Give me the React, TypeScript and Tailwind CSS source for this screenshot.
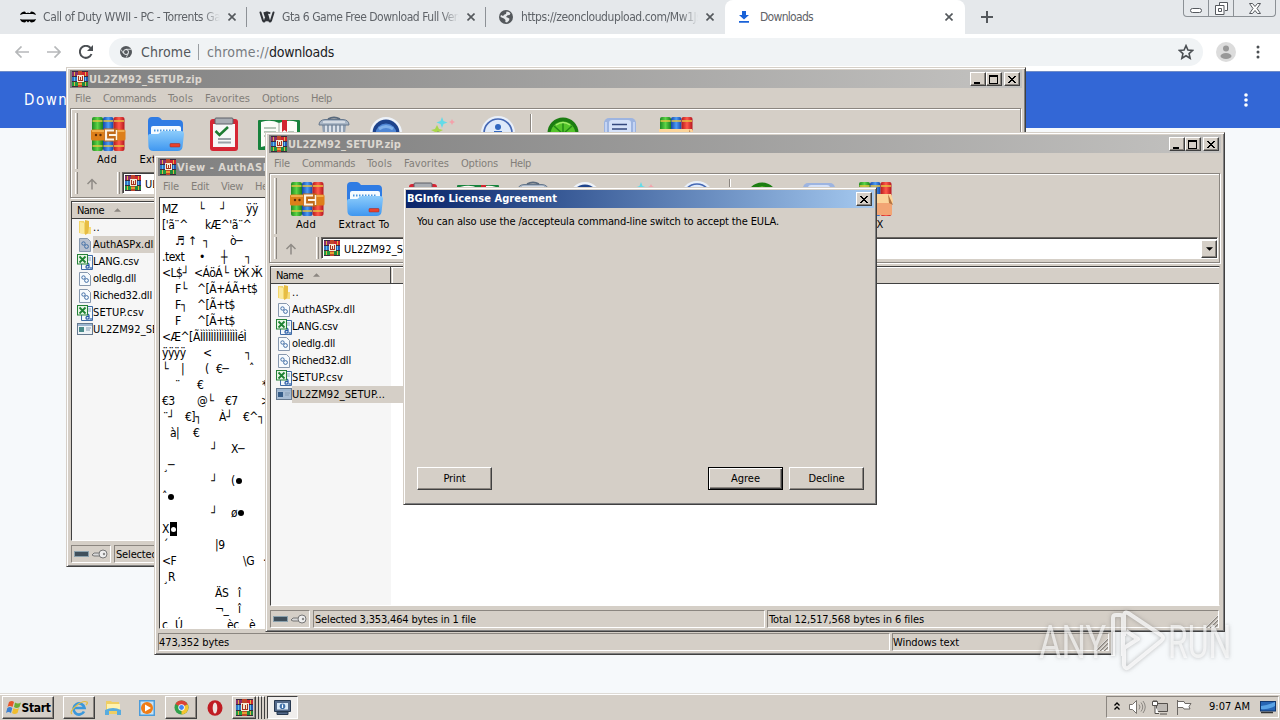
import { useLayoutEffect, useRef, useState } from "react";
import type { ReactNode } from "react";

/* Text stretched or tightened by letter spacing so that it fills a given width. */
function Fit({ w, children, className = "" }: { w: number; children: string; className?: string }) {
  const ref = useRef<HTMLSpanElement>(null);
  const [spacing, setSpacing] = useState(0);
  useLayoutEffect(() => {
    if (ref.current) {
      const natural = ref.current.getBoundingClientRect().width;
      setSpacing((w - natural) / children.length);
    }
  }, []);
  return (
    <span ref={ref} className={`inline-block shrink-0 whitespace-pre ${className}`} style={{ letterSpacing: spacing }}>
      {children}
    </span>
  );
}

type Token = [number, string];

/* A line of tokens, each starting at its own column offset. */
function TokenLine({ tokens, className = "" }: { tokens: Token[]; className?: string }) {
  const first = tokens.length ? tokens[0][0] : 0;
  return (
    <div className={`flex whitespace-pre ${className}`} style={{ paddingLeft: first }}>
      {tokens.map(([x, text], i) => (
        <span key={i} className="shrink-0" style={{ width: i + 1 < tokens.length ? tokens[i + 1][0] - x : undefined }}>
          {text}
        </span>
      ))}
    </div>
  );
}

function RarIcon({ className = "" }: { className?: string }) {
  return (
    <svg viewBox="0 0 16 16" className={`h-4 w-4 shrink-0 ${className}`} shapeRendering="crispEdges">
      <rect width="16" height="16" fill="#3a2a3c" />
      <rect x="0" y="1" width="6" height="4" fill="#8d2d6c" />
      <rect x="10" y="1" width="6" height="4" fill="#cf2430" />
      <rect x="0" y="6" width="6" height="4" fill="#2f73c4" />
      <rect x="10" y="6" width="6" height="4" fill="#2856b0" />
      <rect x="0" y="11" width="6" height="4" fill="#1f9a40" />
      <rect x="10" y="11" width="6" height="4" fill="#1f8a3a" />
      <rect x="6" y="0" width="4" height="16" fill="#c0462a" />
      <rect x="6" y="12" width="4" height="2" fill="#e5a033" />
      <rect x="5" y="4" width="7" height="7" fill="#f4ead6" />
      <path d="M6 5h1v4h1V6h1v3h1V5h1v5H6z" fill="#a8321f" />
      <path d="M2 1h1v4H2zM13 1h1v4h-1zM2 11h1v4H2zM13 11h1v4h-1z" fill="#e3b040" />
      <path d="M2 6h1v4H2zM13 6h1v4h-1z" fill="#5fc4e8" />
    </svg>
  );
}

function BooksIcon({ box = false }: { box?: boolean }) {
  return (
    <svg viewBox="0 0 36 36" className="h-9 w-9">
      <defs>
        <linearGradient id="bkG"><stop offset="0" stopColor="#1d8a22" /><stop offset=".5" stopColor="#5ed447" /><stop offset="1" stopColor="#178020" /></linearGradient>
        <linearGradient id="bkB"><stop offset="0" stopColor="#1546a8" /><stop offset=".5" stopColor="#4d9cf4" /><stop offset="1" stopColor="#1546a8" /></linearGradient>
        <linearGradient id="bkR"><stop offset="0" stopColor="#b51a1c" /><stop offset=".5" stopColor="#ff5a4a" /><stop offset="1" stopColor="#b51620" /></linearGradient>
      </defs>
      <rect x="2" y="1" width="11" height="34" rx="2" fill="url(#bkG)" />
      <rect x="13" y="1" width="10.5" height="34" rx="2" fill="url(#bkB)" />
      <rect x="23.5" y="1" width="11" height="34" rx="2" fill="url(#bkR)" />
      <path d="M2.5 5h10M13.5 5h9.5M24 5h10M2.5 30h10M13.5 30h9.500M24 30h10" stroke="#e9c541" strokeWidth="1.6" />
      {box ? (
        <>
          <path d="M1 14h34v20H1z" fill="#f2a574" />
          <path d="M1 13h33l3 9H19l-18 0z" fill="#fbd49a" />
          <path d="M31 13l5 11-4-2z" fill="#b5733f" />
        </>
      ) : (
        <>
          <rect x="1" y="13.500" width="34.500" height="11" rx="1.500" fill="#dd7f1a" />
          <path d="M2 15h32.500" stroke="#f9bd5e" strokeWidth="1.500" />
          <path d="M14 12.500h13.500v13H14z" fill="#c06a18" />
          <path d="M24 14.500h-8v9h8M19 19h8" fill="none" stroke="#fbf3e6" strokeWidth="2.200" />
          <path d="M26.500 14v10" stroke="#fbf3e6" strokeWidth="1.500" />
          <circle cx="6" cy="19" r="1.200" fill="#5c2d0a" />
          <circle cx="10.500" cy="19" r="1.200" fill="#5c2d0a" />
        </>
      )}
    </svg>
  );
}

function ExtractIcon() {
  return (
    <svg viewBox="0 0 38 36" className="h-9 w-[38px]">
      <defs>
        <linearGradient id="fold" x2="0" y2="1"><stop offset="0" stopColor="#8cccfb" /><stop offset="1" stopColor="#3f97f0" /></linearGradient>
      </defs>
      <path d="M1 5q0-4 4-4h6q2 0 4 3h17q4 0 4 4v12H1z" fill="#2f7ce4" />
      <path d="M4 12q0-2 2-2h26q2 0 2 2v12H4z" fill="#f5fbff" />
      <path d="M7 14.500h24" stroke="#4b96de" strokeWidth="2" strokeDasharray="1.500 1.500" />
      <path d="M1 20q0-2 2-2h7q2 0 3-1.500t3-1.500h18q3 0 3 3l-1.500 13q-.5 4-5 4H6.500q-4.500 0-5-4z" fill="url(#fold)" />
      <rect x="23" y="27.500" width="10" height="3.500" rx=".8" fill="#e8412c" stroke="#9c2420" strokeWidth=".5" />
    </svg>
  );
}

function TestIcon() {
  return (
    <svg viewBox="0 0 32 36" className="h-9 w-8">
      <rect x="2" y="3" width="28" height="32" rx="3" fill="#d62534" />
      <rect x="5" y="8" width="22" height="23" fill="#f7f7f7" />
      <rect x="7" y="2" width="18" height="6" rx="1" fill="#a9adb3" stroke="#5d5f66" />
      <path d="M7.500 15l4 4L20 11" stroke="#1f7c32" strokeWidth="2.500" fill="none" />
      <path d="M10 23h13M10 26.500h13" stroke="#9aa1a8" strokeWidth="2" />
    </svg>
  );
}

function ViewIcon() {
  return (
    <svg viewBox="0 0 44 36" className="h-9 w-11">
      <rect x="1" y="4" width="42" height="30" rx="1" fill="#17823c" />
      <path d="M4 6q10-3 18 1q9-4 18-1v25q-9-3-18 1q-8-4-18-1z" fill="#fbfdf8" />
      <path d="M22 7v25" stroke="#9aa79b" />
      <path d="M7 12h12M7 16h12M7 20h12M31 16h6M26 20h11" stroke="#9fb5a2" strokeWidth="1.500" />
      <path d="M25 4h5v12l-2.500-2-2.500 2z" fill="#d22630" />
    </svg>
  );
}

function DeleteIcon() {
  return (
    <svg viewBox="0 0 32 36" className="h-9 w-8">
      <path d="M4 9h24l-3 26H7z" fill="#91a0b2" />
      <path d="M8 9v25M12 9v25M16 9v25M20 9v25M24 9v25" stroke="#e9eef4" strokeWidth="1.700" />
      <path d="M1 9q0-5 6-5.500h18q6 .5 6 5.500z" fill="#a9b6c6" stroke="#66788d" />
      <path d="M10 3q6-3 12 0" stroke="#59697c" strokeWidth="1.800" fill="none" />
      <path d="M5 6h22" stroke="#fff" fill="none" />
    </svg>
  );
}

function FindIcon() {
  return (
    <svg viewBox="0 0 34 36" className="h-9 w-[34px]">
      <circle cx="17" cy="17" r="16" fill="#eef3fa" />
      <circle cx="17" cy="17" r="13.500" fill="#1d438c" />
      <circle cx="17" cy="18" r="10.500" fill="#4f86d4" />
      <path d="M10 13q7-5 14 0" stroke="#7fb0ea" strokeWidth="3" fill="none" />
    </svg>
  );
}

function WizardIcon() {
  return (
    <svg viewBox="0 0 34 36" className="h-9 w-[34px]">
      <path d="M18 1l1.500 4 4 1.500-4 1.500-1.500 4-1.500-4-4-1.500 4-1.500z" fill="#62dbe8" />
      <path d="M13 9l2 4 4 1-4 2-2 5-2-5-4-2 4-1z" fill="#a9d64b" />
      <path d="M28 3l1 2 2 1-2 1-1 2-1-2-2-1 2-1z" fill="#f3a1aa" />
      <path d="M15 16L4 34" stroke="#6d5ca8" strokeWidth="3" />
    </svg>
  );
}

function InfoIcon() {
  return (
    <svg viewBox="0 0 34 36" className="h-9 w-[34px]">
      <circle cx="17" cy="17" r="17" fill="#e9f0fa" />
      <circle cx="17" cy="17" r="14" fill="#dfeafa" stroke="#4568b4" strokeWidth="1.700" />
      <circle cx="17" cy="11" r="3" fill="#3268c0" />
      <path d="M13 17h6v10" stroke="#3268c0" strokeWidth="4" fill="none" />
    </svg>
  );
}

function VirusIcon() {
  return (
    <svg viewBox="0 0 34 36" className="h-9 w-[34px]">
      <circle cx="17" cy="17" r="15.500" fill="#1c7d12" />
      <circle cx="17" cy="18" r="12.500" fill="#55c52b" />
      <path d="M17 6v26M5 18h24M8 10l18 16M26 10L8 26" stroke="#238a17" strokeWidth="1.500" />
      <path d="M10 9q7-5 14 0" stroke="#a5ec6c" strokeWidth="1.500" fill="none" />
    </svg>
  );
}

function CommentIcon() {
  return (
    <svg viewBox="0 0 34 36" className="h-9 w-[34px]">
      <rect x="1" y="2" width="32" height="32" rx="5" fill="#9db4e0" />
      <rect x="6" y="4" width="22" height="28" rx="3" fill="#d5e1f8" />
      <path d="M9 8.500h15M9 13h15" stroke="#34487d" strokeWidth="1.700" />
      <path d="M3 6v22M31 6v22" stroke="#c4d4f4" strokeWidth="2" />
    </svg>
  );
}

const TOOLS: { w: string; icon: ReactNode; label: string; lw: number }[] = [
  { w: "w-[58px]", icon: <BooksIcon />, label: "Add", lw: 20 },
  { w: "w-[58px]", icon: <ExtractIcon />, label: "Extract To", lw: 51 },
  { w: "w-[58px]", icon: <TestIcon />, label: "Test", lw: 21 },
  { w: "w-[52px]", icon: <ViewIcon />, label: "View", lw: 23 },
  { w: "w-[58px]", icon: <DeleteIcon />, label: "Delete", lw: 32 },
  { w: "w-[46px]", icon: <FindIcon />, label: "Find", lw: 22 },
  { w: "w-[64px]", icon: <WizardIcon />, label: "Wizard", lw: 35 },
  { w: "w-[50px]", icon: <InfoIcon />, label: "Info", lw: 20 },
  { w: "w-[16px]", icon: null, label: "", lw: 0 },
  { w: "w-[48px]", icon: <VirusIcon />, label: "VirusScan", lw: 47 },
  { w: "w-[66px]", icon: <CommentIcon />, label: "Comment", lw: 48 },
  { w: "w-[46px]", icon: <BooksIcon box />, label: "SFX", lw: 18 },
];

function TitleButton({ kind }: { kind: "min" | "max" | "close" }) {
  return (
    <div className="flex h-[14px] w-4 items-center justify-center border border-t-white border-r-[#404040] border-b-[#404040] border-l-white bg-[#d5cfc7] shadow-[inset_-1px_-1px_0_#8b8680]">
      <svg viewBox="0 0 12 11" className="h-[11px] w-3" shapeRendering="crispEdges">
        {kind === "min" && <path d="M2 8h6v2H2z" fill="#000" />}
        {kind === "max" && <path d="M1 1h9v9H1zM2 3v6h7V3z" fillRule="evenodd" fill="#000" />}
        {kind === "close" && <path d="M2 2h2v1h1v1h2V3h1V2h2v1H9v1H8v1H7v1h1v1h1v1h1v1H8V8H7V7H5v1H4v1H2V8h1V7h1V6h1V5H4V4H3V3H2z" fill="#000" />}
      </svg>
    </div>
  );
}

const FRAME =
  "absolute flex flex-col border border-t-[#d5cfc7] border-r-[#404040] border-b-[#404040] border-l-[#d5cfc7] bg-[#d5cfc7] shadow-[inset_1px_1px_0_#ffffff,inset_-1px_-1px_0_#808080]";

const SUNKEN = "border border-t-[#8b8680] border-r-white border-b-white border-l-[#8b8680]";

function Grip({ className = "" }: { className?: string }) {
  return <div className={`w-[3px] shrink-0 border-r border-l border-r-[#8b8680] border-l-white ${className}`} />;
}

function FileIcon({ kind, dim }: { kind: string; dim?: boolean }) {
  if (kind === "up")
    return (
      <svg viewBox="0 0 16 16" className="h-4 w-4">
        <path d="M2 1h5l1 2v11l-6-1z" fill="#f2d66c" />
        <path d="M8 0l4 1v12l-4 2z" fill="#e7bd44" />
        <path d="M3 2l4 1v11l-4-1z" fill="#fbe99c" />
        <path d="M12 7h2v7h-3z" fill="#f6dd80" />
      </svg>
    );
  if (kind === "dll")
    return (
      <svg viewBox="0 0 16 16" className="h-4 w-4">
        <path d="M2.500 1.500h8l3 3v10h-11z" fill={dim ? "#b8c0cf" : "#f6fafd"} stroke="#8798ae" />
        <circle cx="6.500" cy="6.500" r="1.700" fill="none" stroke="#416ea6" />
        <circle cx="9.500" cy="9.500" r="1.900" fill="none" stroke="#416ea6" />
      </svg>
    );
  if (kind === "csv")
    return (
      <svg viewBox="0 0 16 16" className="h-4 w-4">
        <path d="M6.500 1.500h9v14h-11v-6" fill="#f3f8fc" stroke="#3e6ba5" />
        <path d="M11 4h3M11 6h3" stroke="#8fa9c8" />
        <path d="M9 9.500q3-1 3 1v4M12 11.500q-3-.5-3 1.500t3 .5M14 13v2" stroke="#2458a4" strokeWidth="1.200" fill="none" />
        <rect x="0.500" y="0.500" width="10" height="9.500" fill="#e9f6e7" stroke="#268238" />
        <path d="M2.500 2.500l6 6M8.500 2.500l-6 6" stroke="#1e8233" strokeWidth="1.800" />
      </svg>
    );
  return (
    <svg viewBox="0 0 16 16" className="h-4 w-4">
      <rect x="0.500" y="1.500" width="15" height="11" fill={dim ? "#a8bdd4" : "#eef3f7"} stroke="#65798f" />
      <rect x="1" y="2" width="14" height="2" fill="#9db6d0" />
      <rect x="2" y="5" width="5" height="5" fill={dim ? "#365d88" : "#4b8b8b"} />
      <path d="M9 6h5M9 8h4" stroke="#869db4" />
    </svg>
  );
}

const FILES = [
  { kind: "up", name: "..", w: 7 },
  { kind: "dll", name: "AuthASPx.dll", w: 63 },
  { kind: "csv", name: "LANG.csv", w: 46 },
  { kind: "dll", name: "oledlg.dll", w: 43 },
  { kind: "dll", name: "Riched32.dll", w: 59 },
  { kind: "csv", name: "SETUP.csv", w: 51 },
  { kind: "exe", name: "UL2ZM92_SETUP...", w: 93 },
];

function Resize({ className = "" }: { className?: string }) {
  return (
    <svg viewBox="0 0 13 13" className={`h-[13px] w-[13px] ${className}`}>
      <path d="M1 13L13 1M5 13l8-8M9 13l4-4" stroke="#8b8680" strokeWidth="1.500" />
      <path d="M0 13L13 0M4 13l9-9M8 13l5-5" stroke="#fff" strokeWidth=".6" />
    </svg>
  );
}

function ArchiveWindow({ place, selected }: { place: string; selected: number }) {
  return (
    <section className={`${FRAME} ${place} h-[500px] w-[960px] px-[3px] pt-[2px]`}>
      <header className="flex h-[18px] shrink-0 items-center bg-linear-to-r from-[#808080] to-[#c3c2c0] pr-[2px] pl-[2px]">
        <RarIcon />
        <Fit w={113} className="mt-px ml-px text-[11px] leading-[18px] font-bold text-[#dcd7d0]">UL2ZM92_SETUP.zip</Fit>
        <div className="ml-auto flex">
          <TitleButton kind="min" />
          <TitleButton kind="max" />
          <div className="w-[2px]" />
          <TitleButton kind="close" />
        </div>
      </header>
      <nav className="flex h-5 shrink-0 items-center gap-[12px] pt-[2px] pl-[5px] text-[#827e79]">
        <Fit w={16}>File</Fit>
        <Fit w={53}>Commands</Fit>
        <Fit w={25}>Tools</Fit>
        <Fit w={45}>Favorites</Fit>
        <Fit w={37}>Options</Fit>
        <Fit w={21}>Help</Fit>
      </nav>
      <div className="mr-px h-[90px] shrink-0 border border-[#8b8680] shadow-[inset_1px_1px_0_#fff,1px_1px_0_#fff]">
        <div className="flex h-[62px] pt-1 pl-1">
          <Grip className="h-[56px]" />
          <div className="flex pt-[3px] pl-px">
            {TOOLS.map((t, i) => (
              <div key={i} className={`${t.w} flex shrink-0 flex-col items-center`}>
                {t.icon ? (
                  <>
                    {t.icon}
                    <Fit w={t.lw} className="mt-px mr-[2px] leading-[14px]">{t.label}</Fit>
                  </>
                ) : (
                  <div className="-mt-[2px] h-[56px] w-[2px] border-r border-l border-r-white border-l-[#8b8680]" />
                )}
              </div>
            ))}
          </div>
        </div>
        <div className="flex h-[24px] items-start pt-px pr-px pl-1">
          <Grip className="h-[22px]" />
          <svg viewBox="0 0 12 12" className="mt-[6px] ml-[8px] h-3 w-3">
            <path d="M6 11.500V2M1.500 6L6 1.500 10.500 6" stroke="#8f8b86" strokeWidth="1.500" fill="none" />
          </svg>
          <Grip className="ml-[19px] h-[22px]" />
          <div className="ml-[2px] flex h-[22px] grow items-center border border-t-[#6b6762] border-r-white border-b-white border-l-[#6b6762] bg-white pl-px shadow-[inset_1px_1px_0_#404040]">
            <RarIcon className="ml-px" />
            <Fit w={101} className="mt-[3px] ml-[4px]">UL2ZM92_SETUP.zip</Fit>
            <div className="mt-px ml-auto flex h-[18px] w-4 items-center justify-center border border-t-white border-r-[#404040] border-b-[#404040] border-l-white bg-[#d5cfc7] shadow-[inset_-1px_-1px_0_#8b8680]">
              <svg viewBox="0 0 8 4" className="h-1 w-[7px]"><path d="M0 0h8L4 4z" /></svg>
            </div>
          </div>
        </div>
      </div>
      <div className="mt-[3px] mr-px ml-px flex h-[340px] shrink-0 flex-col border border-t-[#404040] border-r-[#d5cfc7] border-b-[#ffffff] border-l-[#404040] bg-white">
        <div className="flex h-[17px] shrink-0 border-b border-b-[#404040] bg-[#d5cfc7] shadow-[inset_0_1px_0_#fff]">
          <div className="flex w-[120px] items-center border-r border-r-[#404040] pt-[2px] pl-[5px]">
            <Fit w={27}>Name</Fit>
            <svg viewBox="0 0 8 4" className="mb-[2px] ml-[10px] h-1 w-[7px]"><path d="M0 4h8L4 0z" fill="#8b8680" /></svg>
          </div>
          <div className="ml-px w-px bg-white" />
        </div>
        <div className="h-[321px] w-[120px] bg-[#f6f6f6]">
          {FILES.map((f, i) => (
            <div key={f.name} className="flex h-[17px] w-[200px] items-center pl-[4px]">
              <div className="flex w-[17px] shrink-0 justify-center"><FileIcon kind={f.kind} dim={i === selected} /></div>
              <div className={`flex h-[17px] w-[180px] items-center pt-px ${i === selected ? "bg-[#d5cfc7]" : ""}`}>
                <Fit w={f.w}>{f.name}</Fit>
              </div>
            </div>
          ))}
        </div>
      </div>
      <footer className="mt-[4px] mr-[2px] ml-px flex h-[18px] gap-[2px]">
        <div className={`${SUNKEN} mr-px flex w-[40px] items-center justify-center gap-[3px]`}>
          <svg viewBox="0 0 15 6" className="h-[6px] w-[15px]"><rect x=".5" y=".5" width="14" height="5" fill="#40505c" stroke="#8ba1ad" /></svg>
          <svg viewBox="0 0 16 10" className="h-[10px] w-4">
            <path d="M8 4H2L0 6l2 1h6z" fill="#d8d8d8" stroke="#777" />
            <circle cx="11" cy="5" r="4" fill="#eee" stroke="#777" />
            <circle cx="12" cy="5" r="1.200" fill="#888" />
          </svg>
        </div>
        <div className={`${SUNKEN} flex w-[452px] items-center pt-px`}><Fit w={161} className="ml-px">Selected 3,353,464 bytes in 1 file</Fit></div>
        <div className={`${SUNKEN} flex grow items-center justify-between pt-px`}>
          <Fit w={155} className="ml-px">Total 12,517,568 bytes in 6 files</Fit>
          <Resize className="mt-[3px]" />
        </div>
      </footer>
    </section>
  );
}

const HEX_LINES: Token[][] = [
  [[1, "MZ"], [37, "└"], [59, "┘"], [85, "ÿÿ"]],
  [[1, "['ã¨^"], [44, "kÆ^'ã¨^"]],
  [[14, "♬"], [27, "↑"], [42, "┐"], [69, "ò─"]],
  [[1, ".text"], [38, "•"], [60, "┼"], [84, "┐"]],
  [[1, "<L$┘"], [33, "<ÁöÁ└"], [73, "tӁ"], [90, "Ӂ"]],
  [[14, "F└"], [36, "^[Ã+ÁÃ+t$"]],
  [[14, "F┐"], [36, "^[Ã+t$"]],
  [[14, "F"], [36, "^[Ã+t$"]],
  [[1, "<Æ^["], [32, "ÃÌÌÌÌÌÌÌÌÌÌÌÌÌÌéÌ"]],
  [[1, "ÿÿÿÿ"], [42, "<"], [84, "┐"]],
  [[1, "└"], [20, "|"], [44, "("], [55, "€─"], [88, "ˆ"]],
  [[14, "¨"], [36, "€"], [101, "*"]],
  [[1, "€3"], [36, "@└"], [64, "€7"], [100, ">"]],
  [[2, "¨┘"], [24, "€]┐"], [58, "À┘"], [82, "€^┐"]],
  [[9, "à|"], [32, "€"]],
  [[50, "┘"], [70, "X─"]],
  [[2, "¸─"]],
  [[50, "┘"], [70, "("], [75, "⚫"]],
  [[1, "ˆ"], [8, "⚫"]],
  [[50, "┘"], [70, "ø"], [77, "⚫"]],
  [],
  [[2, "´"], [54, "|9"]],
  [[1, "<F"], [82, "\\G"], [102, "·"]],
  [[2, "¸R"]],
  [[54, "ÄS"], [77, "î"]],
  [[54, "¬_"], [77, "î"]],
  [[1, "c"], [14, "Ú"], [66, "èc"], [88, "è"]],
];

function ViewerWindow() {
  return (
    <section className={`${FRAME} top-[155px] left-[154px] h-[500px] w-[959px] px-[3px] pt-[2px]`}>
      <header className="flex h-[18px] shrink-0 items-center bg-linear-to-r from-[#808080] to-[#c3c2c0] pl-[2px]">
        <RarIcon />
        <Fit w={120} className="mt-px ml-px text-[11px] leading-[18px] font-bold text-[#dcd7d0]">View - AuthASPx.dll</Fit>
      </header>
      <nav className="flex h-5 shrink-0 items-center gap-[12px] pt-[2px] pl-[5px] text-[#827e79]">
        <Fit w={16}>File</Fit>
        <Fit w={18}>Edit</Fit>
        <Fit w={22}>View</Fit>
        <Fit w={21}>Help</Fit>
      </nav>
      <div className="mt-px mr-[2px] ml-px h-[432px] shrink-0 overflow-hidden border border-t-[#404040] border-r-[#d5cfc7] border-b-white border-l-[#404040] bg-white pt-[3px] pl-px text-[12px]">
        {HEX_LINES.map((tokens, i) =>
          i === 20 ? (
            <div key={i} className="flex h-4 items-center pl-px">
              X<span className="ml-[1px] flex h-[14px] w-[7px] items-center justify-center bg-black"><span className="h-[5px] w-[5px] rounded-full bg-white" /></span>
            </div>
          ) : (
            <TokenLineRow key={i} tokens={tokens} />
          ),
        )}
      </div>
      <footer className="mt-[4px] flex h-[18px] gap-[2px]">
        <div className={`${SUNKEN} flex w-[732px] items-center pt-px`}><Fit w={70}>473,352 bytes</Fit></div>
        <div className={`${SUNKEN} flex grow items-center justify-between pt-px`}>
          <Fit w={66}>Windows text</Fit>
          <Resize className="mt-[3px]" />
        </div>
      </footer>
    </section>
  );
}

/* The heavy dots are drawn as small discs, everything else as text. */
function TokenLineRow({ tokens }: { tokens: Token[] }) {
  const dot = tokens.length > 0 && tokens[tokens.length - 1][1] === "⚫";
  const texts = dot ? tokens.slice(0, -1) : tokens;
  return (
    <div className="flex h-4 items-center">
      <TokenLine tokens={texts} className="leading-4 tracking-[-0.5px]" />
      {dot && <span className="ml-px h-[6px] w-[6px] rounded-full bg-black" />}
    </div>
  );
}

function DialogButton({ label, w, primary }: { label: string; w: number; primary?: boolean }) {
  return (
    <button
      className={`flex h-[23px] w-[75px] items-center justify-center border bg-[#d5cfc7] ${
        primary
          ? "border-black shadow-[inset_1px_1px_0_#fff,inset_-1px_-1px_0_#404040,inset_-2px_-2px_0_#8b8680]"
          : "border-t-white border-r-[#404040] border-b-[#404040] border-l-white shadow-[inset_-1px_-1px_0_#8b8680]"
      }`}
    >
      <Fit w={w}>{label}</Fit>
    </button>
  );
}

function LicenseDialog() {
  return (
    <section className={`${FRAME} top-[187px] left-[403px] h-[318px] w-[474px] px-[2px] pt-[2px]`}>
      <header className="flex h-[18px] shrink-0 items-center justify-between bg-linear-to-r from-[#0a246a] to-[#a6caf0] pr-[2px] pl-px">
        <Fit w={150} className="text-[11px] leading-[18px] font-bold text-white">BGInfo License Agreement</Fit>
        <TitleButton kind="close" />
      </header>
      <p className="pt-[6px] pl-[11px] leading-4"><Fit w={362}>You can also use the /accepteula command-line switch to accept the EULA.</Fit></p>
      <div className="mt-auto mb-[14px] flex gap-[6px] pr-[10px] pl-[11px]">
        <DialogButton label="Print" w={22} />
        <div className="grow" />
        <DialogButton label="Agree" w={29} primary />
        <DialogButton label="Decline" w={36} />
      </div>
    </section>
  );
}

function TabClose() {
  return (
    <svg viewBox="0 0 8 8" className="h-2 w-2 shrink-0"><path d="M.5.5l7 7M7.500.5l-7 7" stroke="#54585c" strokeWidth="1.600" /></svg>
  );
}

function Tab({ icon, text, w, last }: { icon: ReactNode; text: string; w: number; last?: boolean }) {
  return (
    <div className="flex h-[34px] w-[239px] shrink-0 items-center pl-[11px]">
      <div className="flex w-[16px] shrink-0 justify-center">{icon}</div>
      <div className="ml-[7px] w-[177px] overflow-hidden mask-r-from-90% text-[12px] text-[#5f6368]"><Fit w={w}>{text}</Fit></div>
      <div className="ml-[8px]"><TabClose /></div>
      {!last && <div className="mr-px ml-auto h-5 w-px bg-[#8d9196]" />}
    </div>
  );
}

function Globe({ className = "" }: { className?: string }) {
  return (
    <svg viewBox="0 0 14 14" className={className}>
      <circle cx="7" cy="7" r="7" fill="#54585c" />
      <path d="M7.500 1.500L10 2l1.500 1.500-1 1.500-2 .3L7 7l2 .8 1.500 1L10 10.500 8 12.500 6.300 12l.2-2L5 8.500 1.500 7q0-1 .5-2l2 1 1.500-1.500L7 4z" fill="#e6e9eb" />
    </svg>
  );
}

function Browser() {
  return (
    <div className="flex h-[693px] flex-col bg-[#f6f9fb]">
      <div className="flex h-[34px] shrink-0 bg-[#e5e8eb] pl-[9px]">
        <Tab
          text="Call of Duty WWII - PC - Torrents Games"
          w={199}
          icon={
            <svg viewBox="0 0 16 12" className="h-3 w-4">
              <path d="M0 4Q1 .5 5 .5L6 2h1.500L8 1l.5 1H10l1-1.500Q15 .5 16 4l-3-1-10 0zM0 8q1 3.500 5 3.500L6.500 10 8 11.500 9.500 10l1.500 1.500q4 0 5-3.500l-2 .5H2z" fill="#000" />
            </svg>
          }
        />
        <Tab
          text="Gta 6 Game Free Download Full Version"
          w={196}
          icon={
            <svg viewBox="0 0 16 12" className="h-3 w-4">
              <path d="M1.500 1.500l2.500 8q1 2 2 0l2-7 2 7q1 2 2 0l2.500-8M8 3Q7 1 5.500 2L8 9.500M8 3q1-2 2.500-1" stroke="#303338" strokeWidth="2" fill="none" strokeLinecap="round" />
            </svg>
          }
        />
        <Tab text="https://zeoncloudupload.com/Mw1Jsd" w={187} last icon={<Globe className="h-[14px] w-[14px]" />} />
        <div className="-ml-px flex w-[240px] items-center rounded-t-lg bg-white pl-[14px]">
          <svg viewBox="0 0 10 12" className="h-3 w-[10px]"><path d="M3 0h4v4h3L5 8.500 0 4h3zM0 10h10v1.700H0z" fill="#1a62d8" /></svg>
          <Fit w={53} className="ml-[11px] text-[12px] text-[#5f6368]">Downloads</Fit>
          <div className="mr-[12px] ml-auto"><TabClose /></div>
        </div>
        <svg viewBox="0 0 12 12" className="mt-[11px] ml-[16px] h-3 w-3"><path d="M6 0v12M0 6h12" stroke="#54585c" strokeWidth="2" /></svg>
        <div className="mr-1 ml-auto flex h-[17px] w-[93px] rounded-b border border-t-0 border-[#8b9095]">
          <div className="flex w-[25px] items-end justify-center border-r border-[#8b9095] pb-[3px]"><div className="h-[5px] w-3 rounded-sm border border-[#55595e] bg-white" /></div>
          <div className="flex w-[25px] items-center justify-center border-r border-[#8b9095]">
            <svg viewBox="0 0 13 13" className="h-[13px] w-[13px]"><path d="M4.500 3V.5h8v8H10M.5 3.500h8.500v9H.5zM3.500 6.500h3v3h-3z" fill="#fff" stroke="#55595e" /></svg>
          </div>
          <div className="flex grow items-center justify-center">
            <svg viewBox="0 0 12 11" className="h-[11px] w-3"><path d="M.5.500h3L6 3.500 8.500.5h3L8 5.500l3.500 5h-3L6 7.500l-2.500 3h-3L4 5.500z" fill="#fff" stroke="#55595e" /></svg>
          </div>
        </div>
      </div>
      <div className="flex h-[37px] shrink-0 items-center bg-white pb-[2px] pl-[15px]">
        <svg viewBox="0 0 14 12" className="h-3 w-[14px]"><path d="M14 6H1M6.500.5L1 6l5.500 5.500" stroke="#b6b8ba" strokeWidth="1.700" fill="none" /></svg>
        <svg viewBox="0 0 14 12" className="ml-[18px] h-3 w-[14px]"><path d="M0 6h13M7.500.5L13 6l-5.500 5.500" stroke="#b6b8ba" strokeWidth="1.700" fill="none" /></svg>
        <svg viewBox="0 0 14 14" className="ml-[18px] h-[14px] w-[14px]"><path d="M12.500 9A6 6 0 1 1 11.500 3" stroke="#4b4f53" strokeWidth="2" fill="none" /><path d="M14 0v6H8z" fill="#4b4f53" /></svg>
        <div className="ml-[16px] flex h-7 w-[1094px] items-center rounded-full bg-[#f0f3f5] pl-[11px] text-[14px]">
          <svg viewBox="0 0 12 12" className="h-3 w-3">
            <circle cx="6" cy="6" r="6" fill="#54585c" />
            <circle cx="6" cy="6" r="2.500" fill="#54585c" stroke="#eef1f3" />
            <path d="M6 3.300h5.500M3.500 7.500L1 3.500M8.300 7.500L6 11.800" stroke="#eef1f3" strokeWidth=".8" />
          </svg>
          <Fit w={50} className="ml-[9px] text-[#54585c]">Chrome</Fit>
          <div className="ml-[7px] h-4 w-px bg-[#9a9ea2]" />
          <Fit w={62} className="ml-[8px] text-[#777b80]">chrome://</Fit>
          <Fit w={65} className="text-[#1c1d1f]">downloads</Fit>
          <svg viewBox="0 0 24 24" className="mr-[9px] ml-auto h-4 w-4"><path d="M12 2.500l2.900 6.500 7.100.7-5.400 4.700 1.600 7L12 17.700l-6.200 3.700 1.600-7L2 9.700 9.100 9z" stroke="#4b4f53" strokeWidth="2.400" fill="none" /></svg>
        </div>
        <svg viewBox="0 0 20 20" className="ml-[13px] h-5 w-5"><circle cx="10" cy="10" r="10" fill="#dcdcdc" /><circle cx="10" cy="6.500" r="3" fill="#989898" /><ellipse cx="10" cy="14" rx="5.500" ry="3" fill="#989898" /></svg>
        <svg viewBox="0 0 4 14" className="ml-[20px] h-[14px] w-1"><circle cx="2" cy="2" r="1.500" fill="#4b4f53" /><circle cx="2" cy="7" r="1.500" fill="#4b4f53" /><circle cx="2" cy="12" r="1.500" fill="#4b4f53" /></svg>
      </div>
      <div className="flex h-[57px] shrink-0 items-center justify-between border-t border-t-[#6f8cc8] bg-[#3367d6] pr-[32px] pl-6">
        <Fit w={88} className="text-[15px] text-white">Downloads</Fit>
        <svg viewBox="0 0 4 14" className="h-[14px] w-1"><circle cx="2" cy="2" r="1.800" fill="#fff" /><circle cx="2" cy="7" r="1.800" fill="#fff" /><circle cx="2" cy="12" r="1.800" fill="#fff" /></svg>
      </div>
    </div>
  );
}

const TASK = "flex h-[23px] items-center justify-center border border-t-white border-r-[#404040] border-b-[#404040] border-l-white shadow-[inset_-1px_-1px_0_#8b8680]";

function Taskbar() {
  return (
    <footer className="flex h-[27px] items-start border-t border-t-[#dedbd6] bg-[#d5cfc7] pt-[1px] pl-[2px] shadow-[inset_0_1px_0_#fff]">
      <div className={`${TASK} w-[52px] mt-px`}>
        <svg viewBox="0 0 16 15" className="h-[15px] w-4">
          <path d="M3 2q3-2 5 0L6.500 7q-3-2-5 0z" fill="#e8562a" /><path d="M9 2.500q3 2 6 0L13.500 7q-3 2-5.500 0z" fill="#6dac35" />
          <path d="M1.300 8q2.500-2 5 0L5 13q-2.500-2-5 0z" fill="#3c80d0" /><path d="M7.500 8q3 2 5.500 0l-1.500 5q-3 2-5.500 0z" fill="#f0bd2e" />
        </svg>
        <Fit w={29} className="text-[12px] font-bold">Start</Fit>
      </div>
      <div className={`${TASK} mt-px ml-[9px] w-[32px]`}>
        <svg viewBox="0 0 18 18" className="h-[18px] w-[18px]"><path d="M14 12.500A5.500 5.500 0 1 1 14.500 9H5" stroke="#3a98dc" strokeWidth="2.700" fill="none" /><path d="M2 15Q-1 13 6 7T17 3q1 1-1 3" stroke="#e3bd40" strokeWidth="1.200" fill="none" /></svg>
      </div>
      <svg viewBox="0 0 18 16" className="mt-[5px] ml-[9px] h-4 w-[18px]"><path d="M2 1h5l1 1h7v12H2z" fill="#efce63" /><path d="M3 4h13v6H3z" fill="#fff2ae" /><path d="M1 15V10q8-4 16 0v5h-4v-4H5v4z" fill="#58acdf" /></svg>
      <svg viewBox="0 0 16 16" className="mt-[5px] ml-[17px] h-4 w-4"><rect width="16" height="16" fill="#4c9cda" /><rect x="1.500" y="1.500" width="13" height="13" fill="#c6e3f7" /><circle cx="8" cy="8" r="6" fill="#f07d16" /><path d="M6 4.500l6 3.500-6 3.500z" fill="#fff" /></svg>
      <div className={`${TASK} mt-px ml-[10px] w-[32px]`}>
        <svg viewBox="0 0 16 16" className="h-[15px] w-[15px]"><circle cx="8" cy="8" r="7.500" fill="#2fa04a" /><path d="M8 8L1.500 4.300A7.500 7.500 0 0 1 14.500 4.500z" fill="#db4437" /><path d="M8 8l6.500-3.500A7.500 7.500 0 0 1 8 15.500z" fill="#f4c430" /><circle cx="8" cy="8" r="3.400" fill="#fff" /><circle cx="8" cy="8" r="2.600" fill="#4285f4" /></svg>
      </div>
      <svg viewBox="0 0 16 16" className="mt-[5px] ml-[10px] h-4 w-4"><ellipse cx="8" cy="8" rx="7.500" ry="7.800" fill="#c01c23" /><ellipse cx="8" cy="8" rx="2.300" ry="5.500" fill="#eee3df" /></svg>
      <div className={`${TASK} mt-px ml-[9px] w-[24px]`}><RarIcon className="h-[17px] w-[17px]" /></div>
      <div className="mt-px h-[23px] w-[3px] border-t border-r border-t-white border-r-[#404040]" />
      <div className="mt-px h-[23px] w-[3px] border-t border-r border-t-white border-r-[#404040]" />
      <div className="mt-px h-[23px] w-[3px] border-t border-r border-t-white border-r-[#404040]" />
      <div className="mt-px ml-[2px] flex h-[23px] w-[31px] items-center justify-center border border-t-[#404040] border-r-white border-b-white border-l-[#404040] bg-[#f0eeec]">
        <svg viewBox="0 0 17 15" className="h-[15px] w-[17px]"><path d="M.5.500h16v11H.5zM3 12h11v2.500H3z" fill="#53698a" stroke="#27384f" /><rect x="3" y="3" width="11" height="6.500" fill="#d9e9f8" /><circle cx="8.500" cy="6.200" r="2.800" fill="#3e6faa" /><path d="M8.500 4.500v3.500" stroke="#fff" strokeWidth="1.200" /></svg>
      </div>
      <div className={`${SUNKEN} mt-px mr-[1px] ml-auto flex h-[22px] w-[173px] items-center pl-[7px]`}>
        <svg viewBox="0 0 6 8" className="mb-[2px] h-2 w-[6px]"><path d="M.5 3.500L3 1l2.500 2.500M.5 7.500L3 5l2.500 2.500" stroke="#000" strokeWidth="1.300" fill="none" /></svg>
        <svg viewBox="0 0 17 14" className="ml-[9px] h-[14px] w-[17px]"><path d="M.5 4.500h3l4-4v13l-4-4h-3z" fill="#fff" stroke="#77736e" /><path d="M10 4.500q2 2.500 0 5M12 2.500q3.500 4.500 0 9M14 1q4.500 6 0 12" stroke="#8b8782" fill="none" /></svg>
        <svg viewBox="0 0 17 15" className="ml-[6px] h-[15px] w-[17px]"><path d="M4.500 3.500h11v8h-11zM8 14h7" fill="#bdb9b4" stroke="#55514d" /><path d="M.5 1.500h5v4h-5zM2 0v1.500M4 0v1.500M3 5.500v8h4" fill="#fff" stroke="#55514d" /></svg>
        <svg viewBox="0 0 16 15" className="ml-[7px] h-[15px] w-4"><path d="M1.500 0v15M2 1.500h6l1 2h6l-2 3 1 2.500H8L7 7.500H2" fill="#fff" stroke="#6d6965" /></svg>
        <Fit w={41} className="ml-[17px]">9:07 AM</Fit>
        <svg viewBox="0 0 16 13" className="ml-[10px] h-[13px] w-4"><rect x=".5" y=".5" width="15" height="9.500" fill="#2765b4" stroke="#12376f" /><path d="M1 5Q8 4 15 1v4Q8 9 1 8z" fill="#5aa3e5" /><path d="M1 11.500h12" stroke="#333" strokeWidth="1.500" /></svg>
      </div>
    </footer>
  );
}

function Watermark() {
  return (
    <div className="absolute top-[608px] left-[1039px] flex h-[66px] w-[200px] items-center font-[Roboto,sans-serif] text-[47px] leading-none font-normal text-white/65 drop-shadow-[0_0_2px_rgba(90,90,90,0.55)]">
      <span className="w-[70px] origin-left scale-x-[0.73]">ANY</span>
      <svg viewBox="0 0 58 66" className="h-[66px] w-[58px] shrink-0">
        <path d="M4 48V10q0-3 3-3h4q3 0 3 3v38M15 28V8q0-5 4-3l33 22q4 3 0 6L20 59q-4 3-5-2V40l14-9-12-8" fill="none" stroke="#fff" strokeOpacity=".75" strokeWidth="4" strokeLinejoin="round" />
      </svg>
      <span className="ml-[1px] origin-left scale-x-[0.68]">RUN</span>
    </div>
  );
}

export default function App() {
  return (
    <main className="relative h-[720px] w-[1280px] overflow-hidden font-['DejaVu_Sans_Condensed','DejaVu_Sans',sans-serif] text-[11px] leading-[14px] text-black">
      <Browser />
      <Taskbar />
      <ArchiveWindow place="top-[67px] left-[66px]" selected={1} />
      <ViewerWindow />
      <ArchiveWindow place="top-[132px] left-[265px]" selected={6} />
      <LicenseDialog />
      <Watermark />
    </main>
  );
}
